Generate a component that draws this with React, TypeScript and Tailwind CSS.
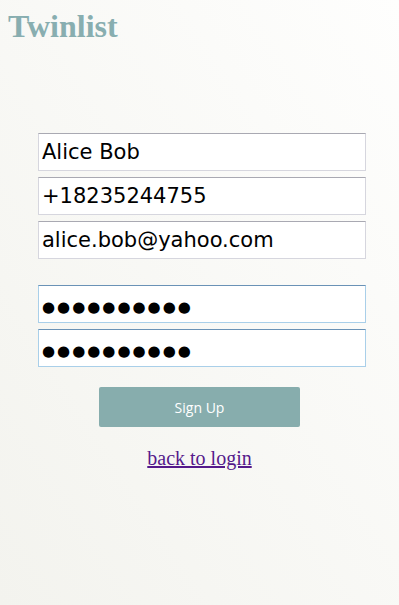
export default function App() {
  const textFields = [
    { type: "text", value: "Alice Bob" },
    { type: "tel", value: "+18235244755" },
    { type: "email", value: "alice.bob@yahoo.com" },
  ];

  // masked values drawn with large discs, like the browser's password glyphs
  const masked = "●●●●●●●●●●";

  return (
    <div className="min-h-[605px] w-full bg-linear-to-bl from-[#fefefd] to-[#f3f3ee]">
      <h1 className="px-2 pt-2 text-[32px] leading-[37px] font-bold text-[#88aeb0] font-['Liberation_Serif',serif]">
        Twinlist
      </h1>

      <form
        className="mt-[88px] flex flex-col"
        onSubmit={(e) => e.preventDefault()}
      >
        <div className="flex flex-col gap-[6px] pl-[38px]">
          {textFields.map((f) => (
            <input
              key={f.value}
              type={f.type}
              defaultValue={f.value}
              className="h-[38px] w-[328px] border border-[#d6d6de] border-t-[#a9a9b2] bg-white px-[3px] text-[21px] text-black outline-none font-['DejaVu_Sans',sans-serif]"
            />
          ))}
        </div>

        <div className="mt-[26px] flex flex-col gap-[6px] pl-[38px]">
          <input
            type="text"
            aria-label="Password"
            defaultValue={masked}
            className="h-[38px] w-[328px] border border-[#a9cfe9] border-t-[#6a92b6] bg-white px-[3px] pt-[5px] text-[15px] tracking-[2px] text-black outline-none font-['DejaVu_Sans',sans-serif]"
          />
          <input
            type="text"
            aria-label="Confirm password"
            defaultValue={masked}
            className="h-[38px] w-[328px] border border-[#a9cfe9] border-t-[#6a92b6] bg-white px-[3px] pt-[5px] text-[15px] tracking-[2px] text-black outline-none font-['DejaVu_Sans',sans-serif]"
          />
        </div>

        <div className="flex flex-col items-center">
          <button
            type="submit"
            className="mt-[20px] h-[40px] w-[201px] rounded-[2px] bg-[#87adad] text-[14px] text-white font-['Open_Sans',sans-serif]"
          >
            Sign Up
          </button>
          <a
            href="#"
            className="mt-[20px] text-[20px] leading-[23px] text-[#551a8b] underline font-['Liberation_Serif',serif]"
          >
            back to login
          </a>
        </div>
      </form>
    </div>
  );
}
